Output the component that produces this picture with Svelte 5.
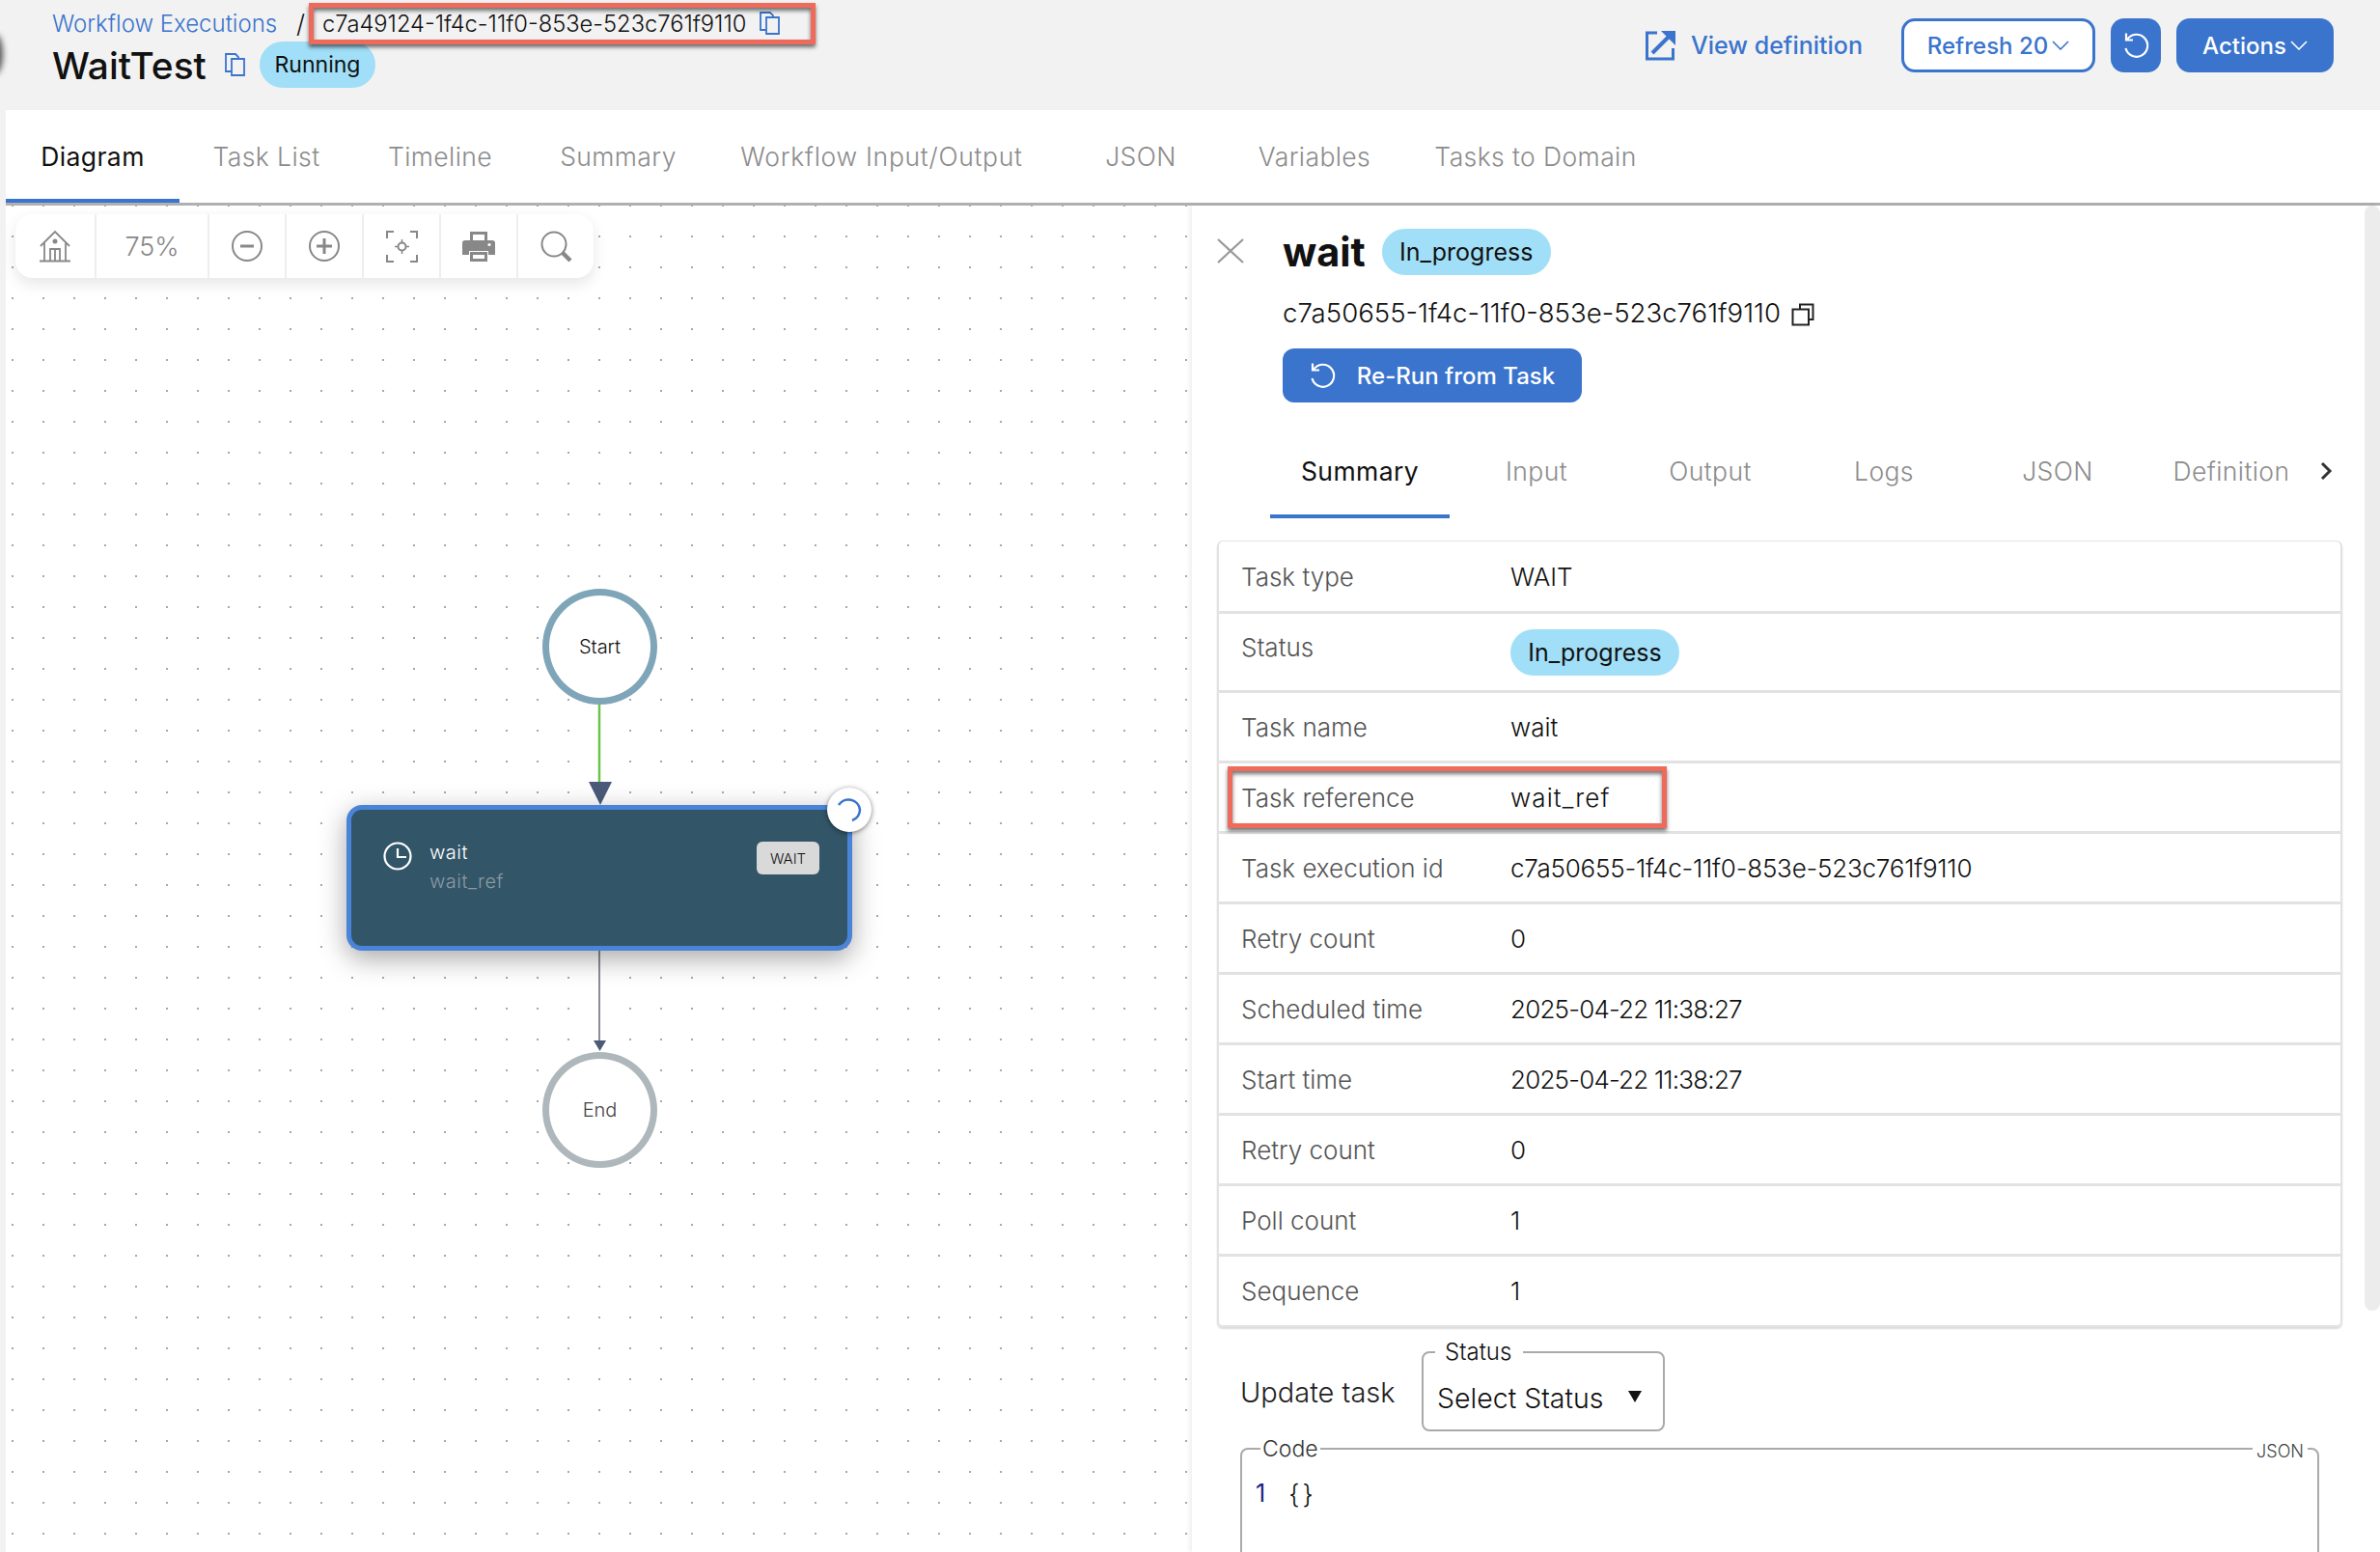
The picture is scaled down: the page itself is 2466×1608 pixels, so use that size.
<script>
  const tabs = ["Diagram", "Task List", "Timeline", "Summary", "Workflow Input/Output", "JSON", "Variables", "Tasks to Domain"];
  const subTabs = ["Summary", "Input", "Output", "Logs", "JSON", "Definition"];
  const rows = [
    ["Task type", "WAIT"],
    ["Status", "In_progress"],
    ["Task name", "wait"],
    ["Task reference", "wait_ref", "wide"],
    ["Task execution id", "c7a50655-1f4c-11f0-853e-523c761f9110", "id"],
    ["Retry count", "0"],
    ["Scheduled time", "2025-04-22 11:38:27", "date"],
    ["Start time", "2025-04-22 11:38:27", "date"],
    ["Retry count", "0"],
    ["Poll count", "1"],
    ["Sequence", "1"]
  ];
</script>

<div class="page">
  <header class="top">
    <div class="title-block">
      <div class="crumbs">
        <a href="#executions">Workflow Executions</a>
        <span class="slash">/</span>
        <span class="crumb-id">c7a49124-1f4c-11f0-853e-523c761f9110</span>
        <svg class="copy" viewBox="0 0 26 26" fill="none" stroke="#3a74cd" stroke-width="1.800"><path d="M8 20H2V2h10l3 3v2"/><path d="M8 7h13v17H8z"/></svg>
      </div>
      <div class="title-row">
        <h1>WaitTest</h1>
        <svg class="copy title-copy" viewBox="0 0 26 26" fill="none" stroke="#3a74cd" stroke-width="1.800"><path d="M8 20H2V2h10l3 3v2"/><path d="M8 7h13v17H8z"/></svg>
        <span class="pill running">Running</span>
      </div>
    </div>
    <div class="actions">
      <a class="view-def" href="#definition">
        <svg viewBox="0 0 32 32" width="32" height="32" fill="none" stroke="#3a74cd" stroke-width="3"><path d="M13 3H2.500v27h27V19"/><path d="M8 24 27 5" stroke-width="4"/><path d="M17 1h15v15z" fill="#3a74cd" stroke="none"/></svg>
        View definition
      </a>
      <button class="btn outline">Refresh 20<svg class="chev" viewBox="0 0 18 10" fill="none" stroke="currentColor" stroke-width="1.600"><path d="M1 1l8 8 8-8"/></svg></button>
      <button class="btn square" aria-label="Reset">
        <svg viewBox="0 0 30 30" width="30" height="30" fill="none" stroke="#fff" stroke-width="2.200"><path d="M6 9a11.500 11.500 0 1 1-1.500 9"/><path d="M5 2.500V9.500h7"/></svg>
      </button>
      <button class="btn solid">Actions<svg class="chev" viewBox="0 0 18 10" fill="none" stroke="currentColor" stroke-width="1.600"><path d="M1 1l8 8 8-8"/></svg></button>
    </div>
  </header>

  <main class="main">
    <nav class="tabs">
      {#each tabs as tab, i}
        <div class="tab" class:active={i === 0}>{tab}</div>
      {/each}
    </nav>

    <div class="content">
      <section class="canvas">
        <div class="toolbar">
          <div class="tool home">
            <svg viewBox="0 0 34 34" width="34" height="34" fill="none" stroke="#888" stroke-width="1.800"><path d="M2 17 17 2l15 15"/><path d="M6 14v18M28 14v18M1 32.500h32"/><path d="M12 32V20h10v12M17 20v12"/><circle cx="17" cy="12" r="1.600" fill="#888"/></svg>
          </div>
          <div class="tool zoom">75%</div>
          <div class="tool">
            <svg viewBox="0 0 32 32" width="32" height="32" fill="none" stroke="#888" stroke-width="2"><circle cx="16" cy="16" r="15"/><path d="M9 16h14" stroke-width="3"/></svg>
          </div>
          <div class="tool">
            <svg viewBox="0 0 32 32" width="32" height="32" fill="none" stroke="#888" stroke-width="2"><circle cx="16" cy="16" r="15"/><path d="M8 16h16M16 8v16" stroke-width="3"/></svg>
          </div>
          <div class="tool">
            <svg viewBox="0 0 33 33" width="33" height="33" fill="none" stroke="#888" stroke-width="2"><path d="M1 8V1h7M25 1h7v7M32 25v7h-7M8 32H1v-7"/><circle cx="16.500" cy="16.500" r="4"/><path d="M16.500 9v4M16.500 20v4M9 16.500h4M20 16.500h4" stroke-width="1.500"/></svg>
          </div>
          <div class="tool">
            <svg viewBox="0 0 34 32" width="34" height="32" fill="#888"><path d="M8 1h18v9h-3V4H11v6H8z"/><path d="M3 10h28a3 3 0 0 1 3 3v12h-7v-4H7v4H0V13a3 3 0 0 1 3-3z"/><path d="M8 22h18v10H8zm3 3v4h12v-4z" fill-rule="evenodd"/><circle cx="28" cy="14.500" r="1.600" fill="#fff"/></svg>
          </div>
          <div class="tool">
            <svg viewBox="0 0 33 33" width="33" height="33" fill="none" stroke="#888" stroke-width="2"><circle cx="14" cy="14" r="12.500"/><path d="M23 23l8 8" stroke-width="4.500"/></svg>
          </div>
        </div>

        <svg class="edges" width="1229" height="1396" viewBox="0 0 1229 1396">
          <path d="M615 517v82" stroke="#6cc24a" stroke-width="2.500"/>
          <path d="M604 597h24l-12 24z" fill="#4a5a78"/>
          <path d="M615 772v94" stroke="#8a8d96" stroke-width="2"/>
          <path d="M609 865h13l-6.500 11z" fill="#4a5a78"/>
        </svg>

        <div class="node start">Start</div>
        <div class="task">
          <svg class="clock" viewBox="0 0 30 30" width="30" height="30" fill="none" stroke="#fff" stroke-width="2.200"><circle cx="15" cy="15" r="13.500"/><path d="M15 7v9h9"/></svg>
          <div class="task-names">
            <div class="task-name">wait</div>
            <div class="task-ref">wait_ref</div>
          </div>
          <span class="type-tag">WAIT</span>
        </div>
        <div class="spinner">
          <svg viewBox="0 0 26 26" width="26" height="26" fill="none" stroke="#3a74cd" stroke-width="2.600"><path d="M2 8A12 12 0 0 1 24 13a12 12 0 0 1-8 11"/></svg>
        </div>
        <div class="node end">End</div>
      </section>

      <aside class="panel">
        <div class="panel-head">
          <svg class="close" viewBox="0 0 28 26" width="28" height="26" stroke="#999" stroke-width="2.200" fill="none"><path d="M1 1l26 24M27 1 1 25"/></svg>
          <div class="head-body">
            <div class="task-title">
              <h2>wait</h2>
              <span class="pill">In_progress</span>
            </div>
            <div class="task-id">
              c7a50655-1f4c-11f0-853e-523c761f9110
              <svg viewBox="0 0 24 24" width="24" height="24" fill="none" stroke="#222" stroke-width="2"><path d="M9 6V1.500h13.500V17H18"/><path d="M1.500 6.500H18v16H1.500z"/></svg>
            </div>
            <button class="btn rerun">
              <svg viewBox="0 0 30 30" width="30" height="30" fill="none" stroke="#fff" stroke-width="2.200"><path d="M6 9a11.500 11.500 0 1 1-1.500 9"/><path d="M5 2.500V9.500h7"/></svg>
              Re-Run from Task
            </button>
          </div>
        </div>

        <div class="subtabs">
          <div class="subtabs-clip">
            {#each subTabs as tab, i}
              <div class="subtab" class:active={i === 0}>{tab}</div>
            {/each}
          </div>
          <svg class="more" viewBox="0 0 13 20" width="13" height="20" fill="none" stroke="#333" stroke-width="3"><path d="M2 2l8 8-8 8"/></svg>
        </div>

        <div class="summary">
          {#each rows as [label, value, kind]}
            <div class="row" class:status={label === "Status"}>
              <div class="label">{label}</div>
              {#if label === "Status"}
                <div class="value"><span class="pill">{value}</span></div>
              {:else}
                <div class="value {kind ?? ''}">{value}</div>
              {/if}
            </div>
          {/each}
        </div>

        <div class="update">
          <span class="update-label">Update task</span>
          <fieldset class="select">
            <legend>Status</legend>
            <span>Select Status</span>
            <i class="caret"></i>
          </fieldset>
        </div>

        <fieldset class="code">
          <legend>Code</legend>
          <span class="lang">JSON</span>
          <div class="code-line"><span class="line-no">1</span><span class="braces">{"{}"}</span></div>
        </fieldset>

        <div class="scrollbar"></div>
      </aside>
    </div>
  </main>

  <div class="callout callout-id"></div>
  <div class="callout callout-ref"></div>
</div>

<style>
  :global(body) {
    margin: 0;
    background: #f2f2f2;
  }
  .page {
    position: relative;
    width: 2466px;
    height: 1608px;
    overflow: hidden;
    font-family: Inter, "Noto Sans", sans-serif;
    color: #111;
  }
  .page::before {
    content: "";
    position: absolute;
    left: -12px;
    top: 36px;
    width: 15px;
    height: 40px;
    border-radius: 50%;
    background: #555;
    filter: blur(3px);
  }

  /* header */
  .top {
    height: 114px;
    display: flex;
    justify-content: space-between;
    padding: 0 48px 0 54px;
    box-sizing: border-box;
  }
  .crumbs {
    display: flex;
    align-items: center;
    height: 48px;
    font-size: 24px;
    font-weight: 300;
  }
  .crumbs a {
    color: #3a74cd;
    text-decoration: none;
    width: 233px;
    white-space: nowrap;
  }
  .slash {
    margin-left: 20px;
    width: 27px;
    font-size: 26px;
  }
  .crumb-id {
    width: 452px;
    font-size: 23.700px;
    white-space: nowrap;
  }
  .copy {
    width: 26px;
    height: 26px;
  }
  .title-row {
    display: flex;
    align-items: center;
    height: 48px;
    margin-top: -5px;
  }
  h1 {
    margin: 0;
    width: 178px;
    font-size: 38.800px;
    font-weight: 500;
    white-space: nowrap;
  }
  .title-copy {
    margin-right: 11px;
  }
  .pill {
    display: inline-flex;
    align-items: center;
    justify-content: center;
    height: 48px;
    width: 175px;
    border-radius: 24px;
    background: #a0dff7;
    color: #111;
    font-size: 25px;
    font-weight: 400;
    white-space: nowrap;
  }
  .pill.running {
    width: 120px;
    font-size: 23px;
  }
  .actions {
    display: flex;
    align-items: center;
    height: 94px;
  }
  .view-def {
    display: flex;
    align-items: center;
    gap: 16px;
    width: 266px;
    color: #3a74cd;
    font-size: 25px;
    font-weight: 500;
    text-decoration: none;
    white-space: nowrap;
  }
  .btn {
    display: flex;
    align-items: center;
    justify-content: center;
    height: 56px;
    box-sizing: border-box;
    border: 0;
    border-radius: 14px;
    background: #3a74cd;
    color: #fff;
    font: 500 24px Inter, "Noto Sans", sans-serif;
    padding: 0;
  }
  .outline {
    width: 201px;
    background: #fff;
    color: #3a74cd;
    border: 3px solid #3a74cd;
  }
  .square {
    width: 52px;
    margin: 0 16px;
  }
  .solid {
    width: 163px;
  }
  .chev {
    width: 18px;
    height: 10px;
    margin-left: 4px;
  }

  /* main tabs */
  .main {
    margin-left: 6px;
    height: 1494px;
    background: #fff;
  }
  .tabs {
    display: grid;
    grid-template-columns: 180px 180px 180px 189px 357px 180px 180px 278px;
    height: 96px;
    border-bottom: 3px solid #b0b0b0;
  }
  .tab {
    display: flex;
    align-items: center;
    justify-content: center;
    font-size: 26.500px;
    letter-spacing: 0.4px;
    font-weight: 300;
    color: #8c8c8c;
    white-space: nowrap;
  }
  .tab:nth-child(5) {
    letter-spacing: 0.700px;
  }
  .tab.active {
    color: #111;
    font-weight: 400;
    box-shadow: inset 0 -4px 0 #3a74cd;
  }
  .content {
    display: flex;
    height: 1395px;
  }

  /* diagram */
  .canvas {
    position: relative;
    width: 1229px;
    background-color: #fff;
    background-image: radial-gradient(circle, #a8a8a8 0.900px, transparent 1.300px);
    background-size: 32px 32px;
    background-position: -9px 16px;
  }
  .toolbar {
    position: absolute;
    left: 10px;
    top: 9px;
    display: flex;
    height: 66px;
    background: #fff;
    border-radius: 18px;
    box-shadow: 0 6px 16px rgba(0, 0, 0, 0.1);
  }
  .tool {
    display: flex;
    align-items: center;
    justify-content: center;
    width: 80px;
    border-left: 2px solid #eee;
    box-sizing: border-box;
  }
  .tool.home {
    width: 82px;
    border-left: 0;
  }
  .tool.zoom {
    width: 117px;
    font-size: 27px;
    font-weight: 300;
    color: #888;
  }
  .edges {
    position: absolute;
    left: 0;
    top: 0;
  }
  .node {
    position: absolute;
    left: 556px;
    width: 119px;
    height: 120px;
    box-sizing: border-box;
    border-radius: 50%;
    border: 7px solid #7fa5b8;
    background: #fff;
    display: flex;
    align-items: center;
    justify-content: center;
    font-size: 20px;
    font-weight: 300;
  }
  .start {
    top: 397px;
  }
  .end {
    top: 877px;
    border-color: #aeb7bb;
    color: #444;
  }
  .task {
    position: absolute;
    left: 353px;
    top: 621px;
    width: 524px;
    height: 151px;
    box-sizing: border-box;
    padding: 33px 29px 0 33px;
    display: flex;
    align-items: flex-start;
    border: 5px solid #4a84d8;
    border-radius: 16px;
    background: #325568;
    box-shadow: 0 8px 28px rgba(0, 0, 0, 0.35);
  }
  .clock {
    margin-right: 18px;
  }
  .task-names {
    flex: 1;
    font-size: 20px;
    font-weight: 300;
    letter-spacing: 0.5px;
    line-height: 30px;
    margin-top: -4px;
    color: #fff;
  }
  .task-ref {
    color: #8a9aa3;
  }
  .type-tag {
    display: flex;
    align-items: center;
    justify-content: center;
    width: 65px;
    height: 34px;
    border-radius: 6px;
    background: #d9d9d9;
    color: #111;
    font-size: 15px;
    font-weight: 300;
  }
  .spinner {
    position: absolute;
    left: 851px;
    top: 603px;
    width: 46px;
    height: 46px;
    border-radius: 50%;
    background: #fff;
    box-shadow: 0 1px 5px rgba(0, 0, 0, 0.5);
    display: flex;
    align-items: center;
    justify-content: center;
  }

  /* task panel */
  .panel {
    position: relative;
    width: 1231px;
    background: #fff;
    box-shadow: -3px 0 4px rgba(0, 0, 0, 0.06);
    overflow: hidden;
  }
  .panel-head {
    display: flex;
    padding: 24px 0 0 26px;
  }
  .close {
    margin: 10px 40px 0 0;
  }
  .task-title {
    display: flex;
    align-items: center;
    height: 48px;
    gap: 17px;
  }
  h2 {
    margin: 0;
    font-size: 41.500px;
    font-weight: 700;
  }
  .task-id {
    display: flex;
    align-items: center;
    gap: 11px;
    height: 40px;
    margin-top: 19px;
    font-size: 27.600px;
    font-weight: 300;
    white-space: nowrap;
  }
  .task-id svg {
    margin-top: 3px;
  }
  .rerun {
    width: 310px;
    gap: 21px;
    margin-top: 17px;
    margin-bottom: 0;
    padding-right: 2px;
    border-radius: 12px;
  }
  .subtabs {
    display: flex;
    align-items: center;
    height: 120px;
    padding-left: 81px;
    box-sizing: border-box;
  }
  .subtabs-clip {
    display: flex;
    width: 1054px;
    height: 100%;
    overflow: hidden;
  }
  .subtab {
    flex: 0 0 180px;
    display: flex;
    align-items: center;
    justify-content: center;
    padding-top: 22px;
    box-sizing: border-box;
    font-size: 26.500px;
    letter-spacing: 0.4px;
    font-weight: 300;
    color: #8c8c8c;
  }
  .subtab.active {
    flex-basis: 186px;
    color: #111;
    font-weight: 400;
    box-shadow: inset 0 -4px 0 #3a74cd;
  }
  .more {
    margin: 22px 0 0 34px;
  }
  .summary {
    margin: 23px 0 0 26px;
    width: 1166px;
    box-sizing: border-box;
    border: 2px solid #e2e2e2;
    border-top-width: 1px;
    border-radius: 6px;
    box-shadow: 0 2px 2px rgba(0, 0, 0, 0.14);
  }
  .row {
    display: flex;
    align-items: center;
    height: 73px;
    box-sizing: border-box;
    padding-left: 23px;
    font-size: 26px;
    font-weight: 300;
    border-bottom: 3px solid #e2e2e2;
  }
  .row:first-child {
    height: 75px;
  }
  .row:last-child {
    height: 71px;
    border-bottom: 0;
  }
  .row.status {
    height: 82px;
  }
  .row.status .label {
    margin-top: -10px;
  }
  .label {
    width: 279px;
    color: #555;
  }
  .value {
    color: #111;
    white-space: nowrap;
  }
  .value.wide {
    letter-spacing: 1.100px;
  }
  .value.id {
    letter-spacing: -0.220px;
  }
  .value.date {
    letter-spacing: -0.800px;
  }
  .update {
    display: flex;
    align-items: flex-start;
    padding: 14px 0 0 50px;
  }
  .update-label {
    width: 188px;
    margin-top: 36px;
    font-size: 29px;
    font-weight: 300;
    color: #222;
  }
  .select {
    position: relative;
    width: 252px;
    height: 94px;
    box-sizing: border-box;
    margin: 0;
    padding: 18px 0 0 14px;
    border: 2px solid #aaa;
    border-radius: 8px;
    font-size: 28.500px;
    font-weight: 300;
  }
  .select legend {
    margin-left: -2px;
    padding: 0 12px 0 10px;
    font-size: 24px;
    line-height: 24px;
  }
  .caret {
    position: absolute;
    right: 22px;
    top: 28px;
    border: 7.500px solid transparent;
    border-top: 12px solid #111;
    border-bottom: 0;
  }
  .code {
    position: relative;
    width: 1118px;
    height: 200px;
    box-sizing: border-box;
    margin: 6px 0 0 50px;
    padding: 19px 0 0 14px;
    border: 2px solid #aaa;
    border-radius: 8px;
  }
  .code legend {
    margin-left: 5px;
    padding: 0 2px;
    font-size: 23px;
    font-weight: 300;
    line-height: 24px;
    color: #333;
  }
  .lang {
    position: absolute;
    right: 10px;
    top: -20px;
    padding: 0 4px;
    background: #fff;
    font-size: 18px;
    font-weight: 300;
    color: #444;
  }
  .code-line {
    display: flex;
    gap: 21px;
    font-size: 25px;
    font-weight: 300;
  }
  .line-no {
    color: #1a237e;
    font-weight: 400;
  }
  .braces {
    font-size: 27px;
    letter-spacing: 3px;
    margin-left: 3px;
  }
  .scrollbar {
    position: absolute;
    right: 0;
    top: 0;
    width: 16px;
    height: 1145px;
    border-radius: 8px;
    background: #ececec;
  }

  /* red annotation boxes pasted over the screenshot */
  .callout {
    position: absolute;
    box-sizing: border-box;
    border: 5px solid #ee6a5a;
    box-shadow: 0 3px 4px rgba(0, 0, 0, 0.55), inset 0 3px 4px rgba(0, 0, 0, 0.55);
    pointer-events: none;
  }
  .callout-id {
    left: 320px;
    top: 3px;
    width: 525px;
    height: 43px;
  }
  .callout-ref {
    left: 1272px;
    top: 794px;
    width: 455px;
    height: 64px;
  }
</style>
